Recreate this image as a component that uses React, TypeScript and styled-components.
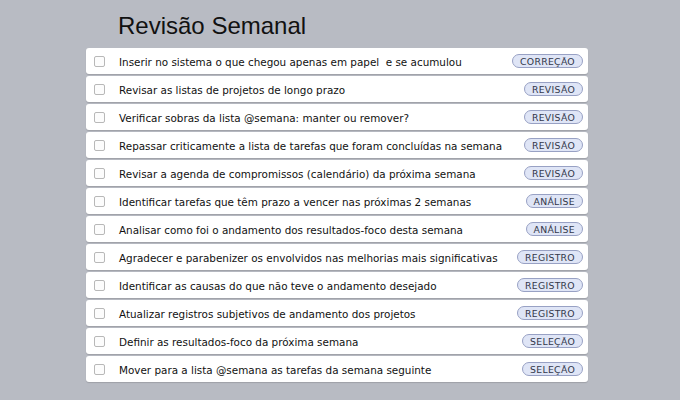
import React from "react";
import styled, { createGlobalStyle } from "styled-components";

const Global = createGlobalStyle`
  html, body { margin: 0; padding: 0; background: #b8bbc3; }
  body { font-family: "DejaVu Sans", Verdana, sans-serif; }
`;

const Page = styled.div`
  width: 680px;
  height: 400px;
  box-sizing: border-box;
  padding: 12px 0 0 86px;
`;

const Title = styled.h1`
  margin: 0 0 8px 32px;
  font-family: "Liberation Sans", Arial, sans-serif;
  font-weight: 400;
  font-size: 24px;
  line-height: 28px;
  color: #111;
`;

const List = styled.div`
  width: 502px;
  display: flex;
  flex-direction: column;
  gap: 2px;
`;

const Row = styled.div`
  height: 26px;
  display: flex;
  align-items: center;
  background: #fff;
  border-radius: 3px;
  box-shadow: 0 1px 1px rgba(0, 0, 0, 0.14);
  padding: 0 5px 0 8px;
`;

const Check = styled.span`
  width: 9px;
  height: 9px;
  border: 1px solid #b8b8b8;
  border-radius: 2px;
  background: #fcfcfc;
  flex: none;
`;

const Label = styled.span`
  flex: 1;
  margin-left: 14px;
  padding-top: 1px;
  font-size: 10.4px;
  color: #111;
  white-space: pre;
`;

const Badge = styled.span`
  flex: none;
  height: 12px;
  line-height: 13px;
  padding: 0 7px;
  border: 1px solid #98a1c4;
  border-radius: 7px;
  background: #dfe5f6;
  color: #33384a;
  font-size: 9.3px;
  letter-spacing: 0.3px;
`;

const items: [string, string][] = [
  ["Inserir no sistema o que chegou apenas em papel  e se acumulou", "CORREÇÃO"],
  ["Revisar as listas de projetos de longo prazo", "REVISÃO"],
  ["Verificar sobras da lista @semana: manter ou remover?", "REVISÃO"],
  ["Repassar criticamente a lista de tarefas que foram concluídas na semana", "REVISÃO"],
  ["Revisar a agenda de compromissos (calendário) da próxima semana", "REVISÃO"],
  ["Identificar tarefas que têm prazo a vencer nas próximas 2 semanas", "ANÁLISE"],
  ["Analisar como foi o andamento dos resultados-foco desta semana", "ANÁLISE"],
  ["Agradecer e parabenizer os envolvidos nas melhorias mais significativas", "REGISTRO"],
  ["Identificar as causas do que não teve o andamento desejado", "REGISTRO"],
  ["Atualizar registros subjetivos de andamento dos projetos", "REGISTRO"],
  ["Definir as resultados-foco da próxima semana", "SELEÇÃO"],
  ["Mover para a lista @semana as tarefas da semana seguinte", "SELEÇÃO"],
];

export default function App() {
  return (
    <Page>
      <Global />
      <Title>Revisão Semanal</Title>
      <List>
        {items.map(([t, b]) => (
          <Row key={t}>
            <Check />
            <Label>{t}</Label>
            <Badge>{b}</Badge>
          </Row>
        ))}
      </List>
    </Page>
  );
}
